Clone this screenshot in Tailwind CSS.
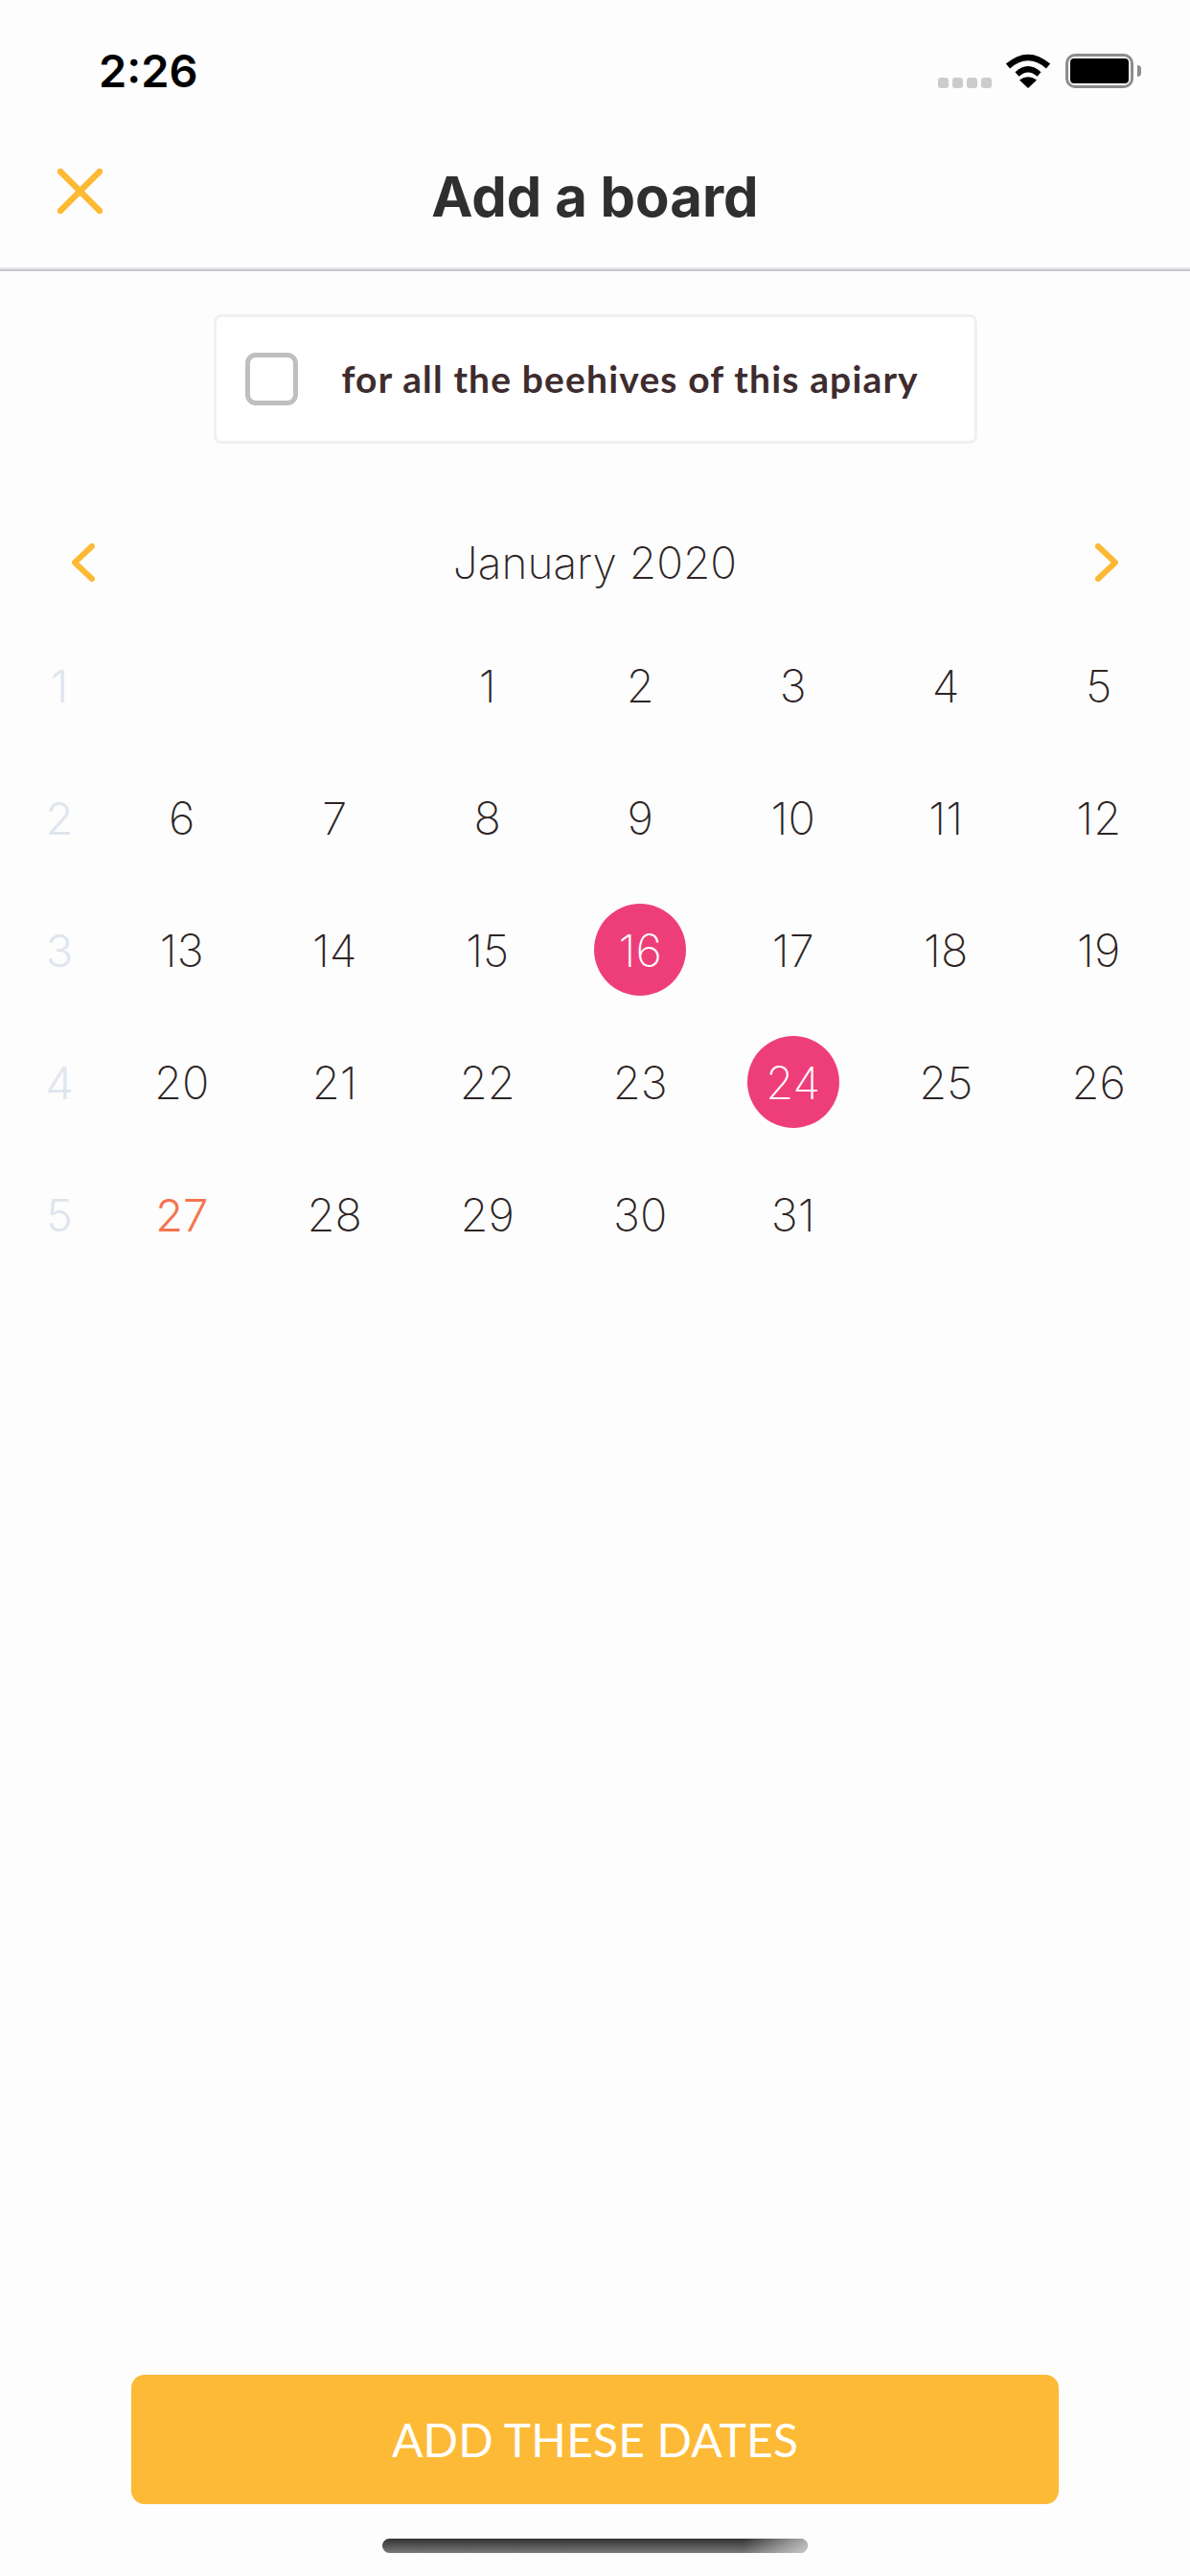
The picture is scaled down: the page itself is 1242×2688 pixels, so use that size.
<!DOCTYPE html>
<html lang="en">
<head>
  <meta charset="UTF-8">
  <meta name="viewport" content="width=device-width, initial-scale=1.0">
  <title>Add a board</title>
  <script src="https://cdn.jsdelivr.net/npm/@tailwindcss/browser@4"></script>
</head>
<body class="antialiased">
  <div class="flex flex-col w-[1242px] h-[2688px] bg-[#fdfdfd] overflow-hidden [font-family:Inter,sans-serif]">

    <!-- Status bar -->
    <div class="flex justify-between items-end h-[92px] pl-[103px] pr-[51px]">
      <span class="text-[47px] leading-[36px] font-semibold text-black">2:26</span>
      <div class="flex items-end">
        <div class="flex gap-[4px] mr-[14px]">
          <span class="w-[11px] h-[11px] rounded-[3px] bg-[#cccccc]"></span>
          <span class="w-[11px] h-[11px] rounded-[3px] bg-[#cccccc]"></span>
          <span class="w-[11px] h-[11px] rounded-[3px] bg-[#cccccc]"></span>
          <span class="w-[11px] h-[11px] rounded-[3px] bg-[#cccccc]"></span>
        </div>
        <svg class="mr-[15px]" width="48" height="36" viewBox="0 0 48 36" fill="none">
          <path d="M3 13Q24 -5 45 13" stroke="#000" stroke-width="6.5"/>
          <path d="M12.500 21.500Q24 11 35.500 21.500" stroke="#000" stroke-width="6"/>
          <path d="M24 36L15 27.500Q24 21 33 27.500Z" fill="#000"/>
        </svg>
        <div class="flex items-center">
          <div class="w-[71px] h-[36px] border-[3px] border-[#8c8c8c] rounded-[10px] p-[2px]">
            <div class="w-full h-full bg-black rounded-[4px]"></div>
          </div>
          <span class="ml-[4px] w-[4px] h-[12px] bg-[#8c8c8c] rounded-r-[4px]"></span>
        </div>
      </div>
    </div>

    <!-- Header -->
    <header class="grid grid-cols-[1fr_auto_1fr] h-[187px] pl-[60px]">
      <svg class="mt-[84px]" width="47" height="47" viewBox="0 0 47 47" fill="none">
        <path d="M3 3L44 44M44 3L3 44" stroke="#fdb933" stroke-width="6.500" stroke-linecap="round"/>
      </svg>
      <h1 class="mt-[79px] -ml-[60px] text-[58px] leading-[68px] font-bold text-[#2f2f2f]">Add a board</h1>
    </header>
    <div class="h-[2px] bg-[#e6e6ec]"></div>
    <div class="h-[2px] bg-[#c9c9cc]"></div>

    <!-- Apply to whole apiary -->
    <div class="flex items-center self-center w-[797px] h-[135px] mt-[45px] pl-[30px] border-[3px] border-[#f0f0f0] rounded-[8px] bg-white">
      <span class="w-[55px] h-[55px] border-[5px] border-[#bfbfbf] rounded-[11px]"></span>
      <span class="ml-[46px] text-[39px] font-bold text-[#3e2c2e] tracking-[1.15px] [font-family:Lato,sans-serif]">for all the beehives of this apiary</span>
    </div>

    <!-- Calendar -->
    <div class="flex justify-between items-center h-[40px] mt-[104px] px-[75px]">
      <svg width="24" height="40" viewBox="0 0 24 40" fill="none">
        <path d="M21 3L3 20L21 37" stroke="#fdb933" stroke-width="6" stroke-linecap="round" stroke-linejoin="round"/>
      </svg>
      <span class="text-[46px] leading-[40px] [font-weight:250] text-[#2e2526]">January 2020</span>
      <svg width="24" height="40" viewBox="0 0 24 40" fill="none">
        <path d="M3 3L21 20L3 37" stroke="#fdb933" stroke-width="6" stroke-linecap="round" stroke-linejoin="round"/>
      </svg>
    </div>

    <div class="grid grid-cols-[110px_repeat(7,159.500px)] auto-rows-[138px] mt-[39px] items-center justify-items-center text-[47px] leading-none [font-weight:250] text-[#2e2526]">
      <span class="pl-[14px] font-light text-[#dfe6ee]">1</span>
      <span></span><span></span>
      <span>1</span><span>2</span><span>3</span><span>4</span><span>5</span>

      <span class="pl-[14px] font-light text-[#dfe6ee]">2</span>
      <span>6</span><span>7</span><span>8</span><span>9</span><span>10</span><span>11</span><span>12</span>

      <span class="pl-[14px] font-light text-[#dfe6ee]">3</span>
      <span>13</span><span>14</span><span>15</span>
      <span class="flex items-center justify-center w-[96px] h-[96px] rounded-full bg-[#ee3e79] text-white">16</span>
      <span>17</span><span>18</span><span>19</span>

      <span class="pl-[14px] font-light text-[#dfe6ee]">4</span>
      <span>20</span><span>21</span><span>22</span><span>23</span>
      <span class="flex items-center justify-center w-[96px] h-[96px] rounded-full bg-[#ee3e79] text-white">24</span>
      <span>25</span><span>26</span>

      <span class="pl-[14px] font-light text-[#dfe6ee]">5</span>
      <span class="font-light text-[#f5744f]">27</span>
      <span>28</span><span>29</span><span>30</span><span>31</span>
    </div>

    <!-- Footer button -->
    <button class="flex items-center justify-center self-center w-[968px] h-[135px] mt-auto rounded-[14px] bg-[#fdba36] text-[48px] font-normal tracking-[0.15px] text-white [font-family:Lato,sans-serif]">ADD THESE DATES</button>
    <div class="relative self-center w-[444px] h-[15px] mt-[36px] mb-[24px] rounded-full overflow-hidden bg-linear-to-b from-[#333333] to-[#7a7a7a]">
      <div class="absolute inset-0 bg-linear-to-r from-transparent from-85% to-white/60"></div>
    </div>
  </div>
</body>
</html>
